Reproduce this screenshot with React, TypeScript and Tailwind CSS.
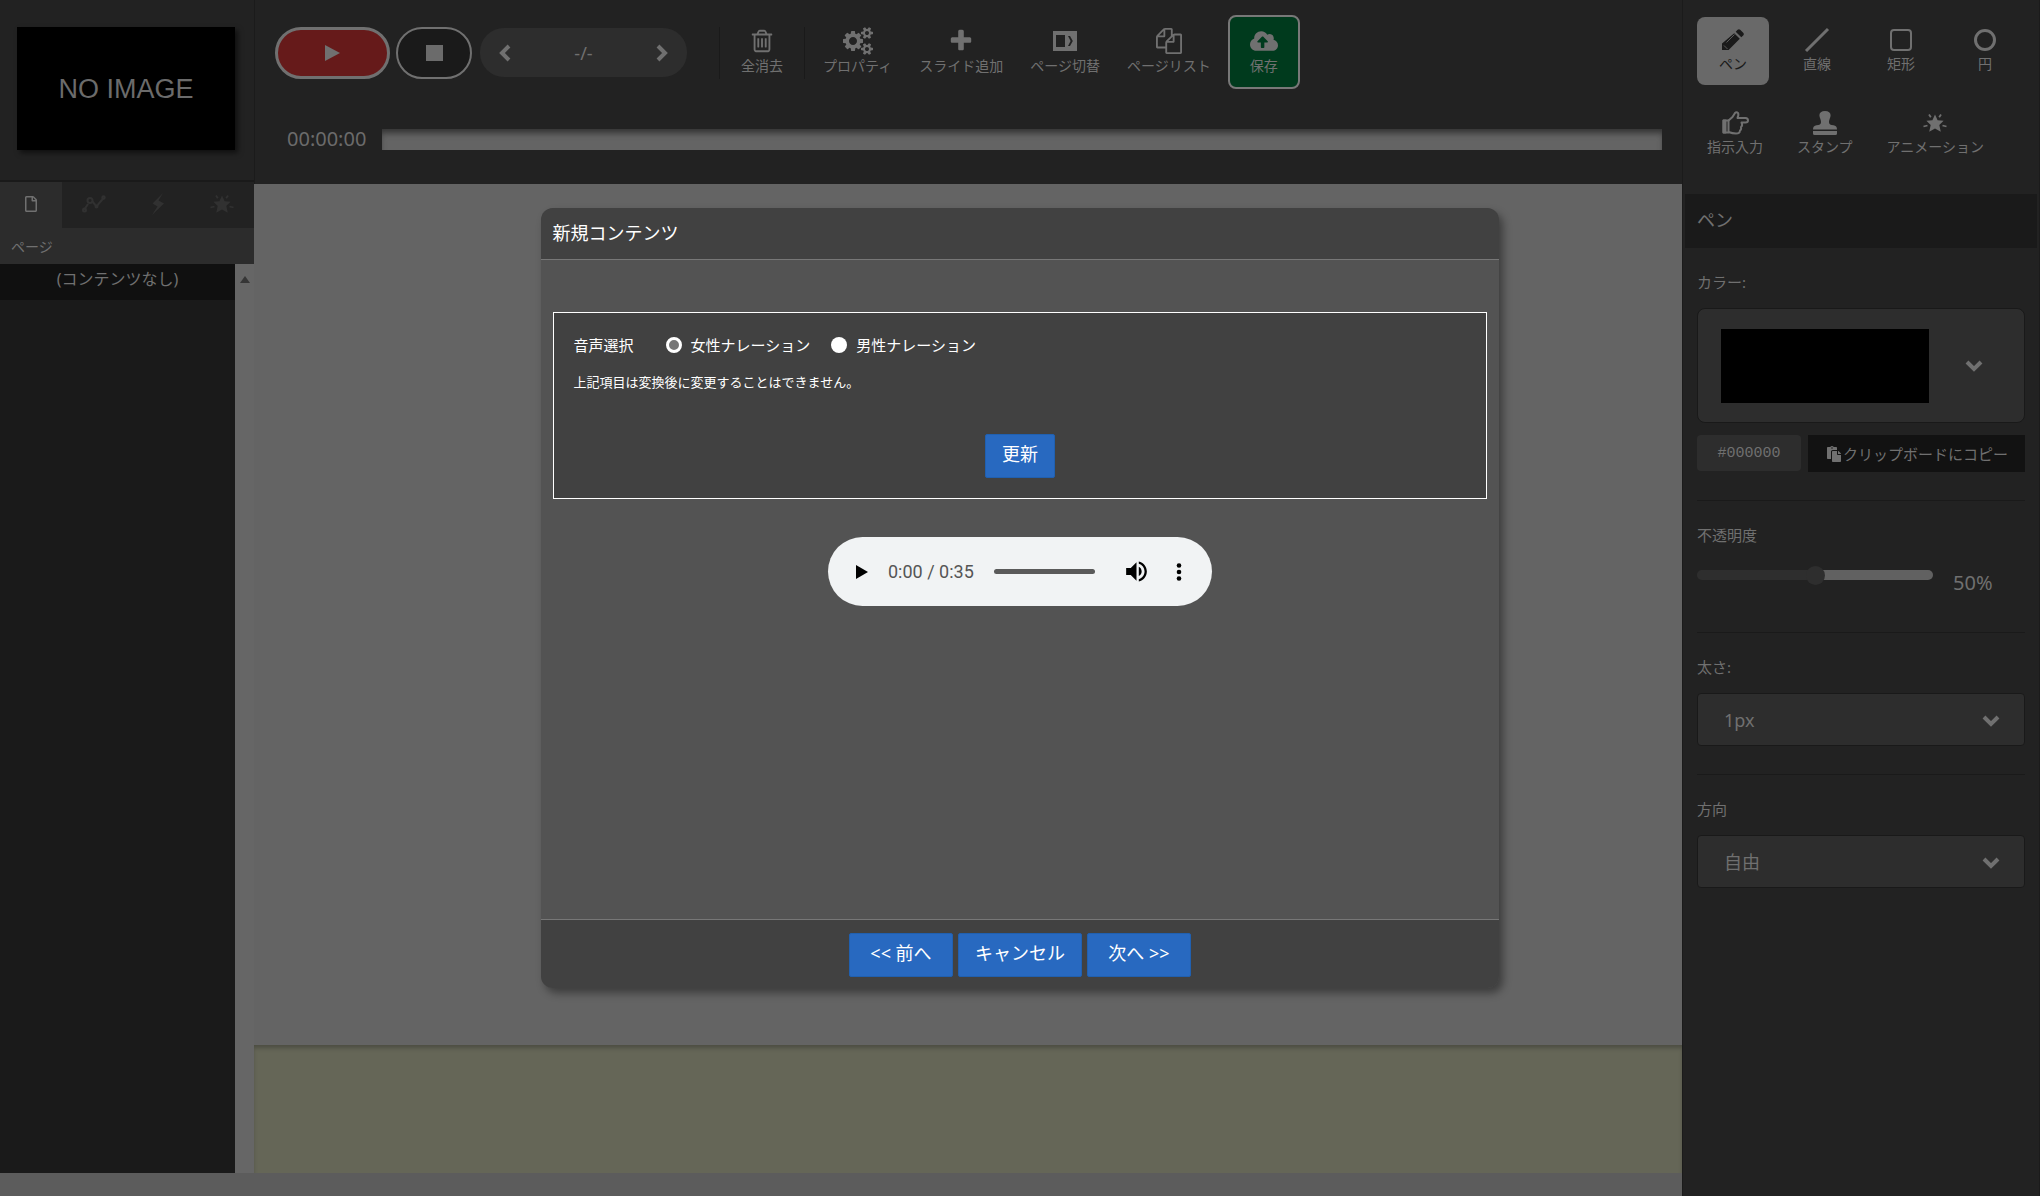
import { useState, type ReactNode } from "react";
import { FaCloudUploadAlt, FaPaste, FaRegFile } from "react-icons/fa";

const TrashIcon = () => (
  <svg viewBox="0 0 1792 1792" className="h-[26px] w-[26px] fill-current">
    <path d="M704 736v576q0 14-9 23t-23 9h-64q-14 0-23-9t-9-23v-576q0-14 9-23t23-9h64q14 0 23 9t9 23zm256 0v576q0 14-9 23t-23 9h-64q-14 0-23-9t-9-23v-576q0-14 9-23t23-9h64q14 0 23 9t9 23zm256 0v576q0 14-9 23t-23 9h-64q-14 0-23-9t-9-23v-576q0-14 9-23t23-9h64q14 0 23 9t9 23zm128 724v-948h-896v948q0 22 7 40.5t14.5 27 10.5 8.5h832q3 0 10.5-8.5t14.5-27 7-40.5zm-672-1076h448l-48-117q-7-9-17-11h-317q-10 2-17 11zm928 32v64q0 14-9 23t-23 9h-96v948q0 83-47 143.5t-113 60.5h-832q-66 0-113-58.5t-47-141.5v-952h-96q-14 0-23-9t-9-23v-64q0-14 9-23t23-9h309l70-167q15-37 54-63t79-26h320q40 0 79 26t54 63l70 167h309q14 0 23 9t9 23z" />
  </svg>
);

const CogsIcon = () => (
  <svg viewBox="0 0 1920 1792" className="h-[28px] w-[30px] fill-current">
    <path d="M896 896q0-106-75-181t-181-75-181 75-75 181 75 181 181 75 181-75 75-181zm768 512q0-52-38-90t-90-38-90 38-38 90q0 53 37.5 90.5t90.5 37.5 90.5-37.5 37.5-90.5zm0-1024q0-52-38-90t-90-38-90 38-38 90q0 53 37.5 90.5t90.5 37.5 90.5-37.5 37.5-90.5zm-384 421v185q0 10-7 19.5t-16 10.5l-155 24q-11 35-32 76 34 48 90 115 7 11 7 20 0 12-7 19-23 30-82.5 89.5t-78.5 59.5q-11 0-21-7l-115-90q-37 19-77 31-11 108-23 155-7 24-30 24h-186q-11 0-20-7.5t-10-17.5l-23-153q-34-10-75-31l-118 89q-7 7-20 7-11 0-21-8-144-133-144-160 0-9 7-19 10-14 41-53t47-61q-23-44-35-82l-152-24q-10-1-17-9.5t-7-19.5v-185q0-10 7-19.5t16-10.5l155-24q11-35 32-76-34-48-90-115-7-11-7-20 0-12 7-20 22-30 82-89t79-59q11 0 21 7l115 90q34-18 77-32 11-108 23-154 7-24 30-24h186q11 0 20 7.5t10 17.5l23 153q34 10 75 31l118-89q8-7 20-7 11 0 21 8 144 133 144 160 0 8-7 19-12 16-42 54t-45 60q23 48 34 82l152 23q10 2 17 10.5t7 19.5zm640 533v140q0 16-149 31-12 27-30 52 51 113 51 138 0 4-4 7-122 71-124 71-8 0-46-47t-52-68q-20 2-30 2t-30-2q-14 21-52 68t-46 47q-2 0-124-71-4-3-4-7 0-25 51-138-18-25-30-52-149-15-149-31v-140q0-16 149-31 13-29 30-52-51-113-51-138 0-4 4-7 4-2 35-20t59-34 30-16q8 0 46 46.5t52 67.5q20-2 30-2t30 2q51-71 92-112l6-2q4 0 124 70 4 3 4 7 0 25-51 138 17 23 30 52 149 15 149 31zm0-1024v140q0 16-149 31-12 27-30 52 51 113 51 138 0 4-4 7-122 71-124 71-8 0-46-47t-52-68q-20 2-30 2t-30-2q-14 21-52 68t-46 47q-2 0-124-71-4-3-4-7 0-25 51-138-18-25-30-52-149-15-149-31v-140q0-16 149-31 13-29 30-52-51-113-51-138 0-4 4-7 4-2 35-20t59-34 30-16q8 0 46 46.5t52 67.5q20-2 30-2t30 2q51-71 92-112l6-2q4 0 124 70 4 3 4 7 0 25-51 138 17 23 30 52 149 15 149 31z" />
  </svg>
);

const PlusIcon = () => (
  <svg viewBox="0 0 1792 1792" className="h-[26px] w-[26px] fill-current">
    <path d="M1600 736v192q0 40-28 68t-68 28h-416v416q0 40-28 68t-68 28h-192q-40 0-68-28t-28-68v-416h-416q-40 0-68-28t-28-68v-192q0-40 28-68t68-28h416v-416q0-40 28-68t68-28h192q40 0 68 28t28 68v416h416q40 0 68 28t28 68z" />
  </svg>
);

const FilesIcon = () => (
  <svg viewBox="0 0 1792 1792" className="h-[26px] w-[26px] fill-current">
    <path d="M1696 384q40 0 68 28t28 68v1216q0 40-28 68t-68 28h-960q-40 0-68-28t-28-68v-288h-544q-40 0-68-28t-28-68v-672q0-40 20-88t48-76l408-408q28-28 76-48t88-20h416q40 0 68 28t28 68v328q68-40 128-40h416zm-544 213l-299 299h299v-299zm-640-384l-299 299h299v-299zm196 647l316-316v-416h-384v416q0 40-28 68t-68 28h-416v640h512v-256q0-40 20-88t48-76zm956 804v-1152h-384v416q0 40-28 68t-68 28h-416v640h896z" />
  </svg>
);

const SwitchPageIcon = () => (
  <svg viewBox="0 0 24 20" className="h-5 w-6 fill-current">
    <path fillRule="evenodd" d="M0 0h24v20H0zM3 4v12h9V4zM15 5l2.600 5L15 15h2l2.800-5L17 5z" />
  </svg>
);

const BurstIcon = () => (
  <svg viewBox="0 0 24 24" className="h-6 w-6 fill-current stroke-current">
    <path strokeWidth="0" d="M12 3.500l2.600 5.700 6 .6-4.300 4.300 1.500 6.700L12 17.500l-5.800 3.300 1.500-6.700-4.300-4.300 6-.6z" />
    <path strokeWidth="1.800" d="M6 3.500l1.800 2.700M18 3.500l-1.800 2.700M.5 15.500l4-1M23.500 15.500l-4-1" />
  </svg>
);

const GraphIcon = () => (
  <svg viewBox="0 0 24 18" className="h-[18px] w-6 fill-none stroke-current" strokeWidth="2">
    <path d="M2 15l4-6M10 6l4.500 5.500L21.500 3" />
    <circle cx="2.500" cy="15" r="1.500" />
    <circle cx="8" cy="5.500" r="2.500" />
    <circle cx="14.500" cy="11.500" r="1" />
    <circle cx="21.500" cy="2.500" r="1.200" />
  </svg>
);

const FlashIcon = () => (
  <svg viewBox="0 0 14 22" className="h-[22px] w-3.5 fill-current">
    <path d="M12 0L1.500 10.500l5 3L1 22 13 10.500l-5.500-3z" />
  </svg>
);

const PencilIcon = () => (
  <svg viewBox="0 0 22 22" className="h-[22px] w-[22px]">
    <path className="fill-current" d="M12.200 4.200l5.600 5.600L6.600 21H0v-6.600zM13.700 2.700l1.900-1.900q1.300-1.300 2.600 0l3 3q1.300 1.300 0 2.600l-1.900 1.900z" />
    <path className="fill-none stroke-[#696969]" strokeWidth="0.800" d="M4.500 13.500l8-8M2 16.500l3.500 3.500" />
  </svg>
);

const LineIcon = () => (
  <svg viewBox="0 0 26 26" className="h-[26px] w-[26px] fill-none stroke-current" strokeWidth="3">
    <path d="M2 24L24 2" />
  </svg>
);

const RectIcon = () => (
  <svg viewBox="0 0 22 22" className="h-[22px] w-[22px] fill-none stroke-current" strokeWidth="2">
    <rect x="1" y="1" width="20" height="20" rx="3" />
  </svg>
);

const CircleIcon = () => (
  <svg viewBox="0 0 22 22" className="h-[22px] w-[22px] fill-none stroke-current" strokeWidth="3">
    <circle cx="11" cy="11" r="9.500" />
  </svg>
);

const HandIcon = () => (
  <svg viewBox="0 0 27 24" className="h-6 w-[27px] fill-none stroke-current" strokeWidth="2" strokeLinejoin="round">
    <path d="M1.500 9.500h5v12h-5z" />
    <path className="fill-current" d="M1.500 9.500h2v12h-2z" />
    <path d="M6.500 9.500l4-3.500 2.500-4q1.500-1.500 3 0 1 1.500-.5 5h8q2.500.2 2.500 2.300 0 2.200-2.500 2.200h-4q1.500 3-.5 4.500.5 3-1 3.500 0 3-4 3-3.500 0-7.500-1.500" />
  </svg>
);

const StampIcon = () => (
  <svg viewBox="0 0 24 24" className="h-6 w-6 fill-current">
    <path d="M12 0c3.600 0 5.600 1.600 5.600 4.300 0 2.200-1.600 4.200-1.600 6.700 0 2.300 1.500 3 4.500 3.300 2.300.3 3.500 1.700 3.500 4.200H0c0-2.500 1.200-3.900 3.500-4.200 3-.3 4.500-1 4.500-3.300 0-2.500-1.600-4.500-1.600-6.700C6.400 1.600 8.400 0 12 0zM0 20h24v2.500q0 1.500-1.500 1.500h-21Q0 24 0 22.500z" />
  </svg>
);

const ChevronDown = ({ className }: { className?: string }) => (
  <svg viewBox="0 0 18 12" className={`h-3 w-[18px] fill-none stroke-current ${className}`} strokeWidth="4">
    <path d="M2 2l7 7 7-7" />
  </svg>
);

const ChevronSide = ({ d }: { d: string }) => (
  <svg viewBox="0 0 12 18" className="h-[18px] w-3 fill-none stroke-current" strokeWidth="4">
    <path d={d} />
  </svg>
);

type ToolProps = { icon: ReactNode; label: string };

const ToolbarButton = ({ icon, label }: ToolProps) => (
  <button className="flex flex-col items-center pt-3">
    <span className="flex h-7 items-center">{icon}</span>
    <span className="pt-px text-sm leading-5">{label}</span>
  </button>
);

const PanelTool = ({ icon, label, active }: ToolProps & { active?: boolean }) => (
  <button
    className={`flex h-[68px] min-w-[72px] flex-col items-center rounded-lg px-2 pt-[9px] ${
      active ? "bg-[#696969] text-[#1a1a1a]" : ""
    }`}
  >
    <span className="flex h-7 items-center">{icon}</span>
    <span className="px-0.5 text-sm leading-5">{label}</span>
  </button>
);

const PanelSelect = ({ id, label, value }: { id: string; label: string; value: string }) => (
  <div className="mx-[14px] border-t border-[#1a1a1a] pt-[22px] pb-7">
    <label htmlFor={id} className="block text-[15px] leading-6">
      {label}
    </label>
    <div className="relative mt-[14px]">
      <select
        id={id}
        className="h-[53px] w-full appearance-none rounded border border-[#191919] bg-[#2d2d2d] px-[26px] text-lg"
      >
        <option>{value}</option>
      </select>
      <ChevronDown className="pointer-events-none absolute top-[22px] right-[25px]" />
    </div>
  </div>
);

const TABS = [
  { name: "図形", icon: <GraphIcon /> },
  { name: "効果", icon: <FlashIcon /> },
  { name: "アニメーション", icon: <BurstIcon /> },
];

const Sidebar = () => (
  <aside className="flex w-[254px] shrink-0 flex-col">
    <div className="h-[182px] border-b-2 border-[#1a1a1a] pt-[27px] pl-[17px]">
      <div className="flex h-[123px] w-[218px] items-center justify-center bg-black pt-0.5 font-['Liberation_Sans',sans-serif] text-[27px] text-[#6b6b6b] shadow-[3px_3px_5px_#0008]">
        NO IMAGE
      </div>
    </div>
    <div className="flex h-[46px] text-[#313131]">
      <button aria-label="ページ" className="flex w-[62px] items-center justify-center bg-[#2c2c2c] pb-0.5 text-[#707070]">
        <FaRegFile className="h-4 w-4" />
      </button>
      {TABS.map((tab) => (
        <button key={tab.name} aria-label={tab.name} className="flex flex-1 items-center justify-center pb-0.5">
          {tab.icon}
        </button>
      ))}
    </div>
    <div className="h-9 bg-[#2c2c2c] px-[11px] py-[7px] text-sm leading-6">ページ</div>
    <div className="flex flex-1 bg-[#1a1a1a]">
      <div className="flex-1">
        <div className="h-9 bg-[#101010] pt-[3px] text-center text-base leading-6">(コンテンツなし)</div>
      </div>
      <div className="flex w-[19px] justify-center bg-[#666] pt-3">
        <svg viewBox="0 0 10 7" className="h-[7px] w-[10px] fill-[#363636]">
          <path d="M0 7l5-7 5 7z" />
        </svg>
      </div>
    </div>
  </aside>
);

const Toolbar = () => (
  <header className="h-[184px] border-l border-[#1b1b1b] bg-[#222]">
    <div className="flex h-[104px] items-start pt-[15px] pl-5">
      <div className="mt-3 flex">
        <button
          aria-label="再生"
          className="flex h-[52px] w-[115px] items-center justify-center rounded-[26px] border-3 border-[#707070] bg-[#661a1a]"
        >
          <svg viewBox="0 0 15 16" className="h-4 w-[15px] fill-current">
            <path d="M0 0l15 8-15 8z" />
          </svg>
        </button>
        <button
          aria-label="停止"
          className="ml-1.5 flex h-[52px] w-[76px] items-center justify-center rounded-[26px] border-2 border-[#707070] bg-[#1a1a1a]"
        >
          <span className="h-4 w-[17px] bg-[#6b6b6b]" />
        </button>
        <div className="mt-px ml-2 flex h-[49px] w-[207px] items-center justify-between rounded-3xl bg-[#2d2d2d] px-[19px]">
          <button aria-label="前のページ">
            <ChevronSide d="M10 2L3 9l7 7" />
          </button>
          <span className="text-lg leading-6">-/-</span>
          <button aria-label="次のページ">
            <ChevronSide d="M2 2l7 7-7 7" />
          </button>
        </div>
      </div>
      <div className="mt-3 ml-8 h-[52px] w-px bg-[#1a1a1a]" />
      <div className="flex px-[21px]">
        <ToolbarButton icon={<TrashIcon />} label="全消去" />
      </div>
      <div className="mt-3 mr-[18px] h-[52px] w-px bg-[#1a1a1a]" />
      <div className="flex gap-[27px]">
        <ToolbarButton icon={<CogsIcon />} label="プロパティ" />
        <ToolbarButton icon={<PlusIcon />} label="スライド追加" />
        <ToolbarButton icon={<SwitchPageIcon />} label="ページ切替" />
        <ToolbarButton icon={<FilesIcon />} label="ページリスト" />
      </div>
      <button className="ml-[17px] flex h-[74px] w-[72px] flex-col items-center rounded-lg border-2 border-[#787878] bg-[#003a1d] pt-[10px]">
        <span className="flex h-7 items-center">
          <FaCloudUploadAlt className="h-7 w-7" />
        </span>
        <span className="pt-px text-sm leading-5">保存</span>
      </button>
    </div>
    <div className="flex items-center pt-[21px] pr-5 pl-8">
      <span className="w-[95px] text-xl leading-7 text-[#6b6b6b]">00:00:00</span>
      <div className="h-[21px] flex-1 bg-[#646464] shadow-[inset_0_6px_6px_-2px_#333]" />
    </div>
  </header>
);

const ToolPanel = () => {
  const [opacity, setOpacity] = useState(50);

  return (
    <aside className="w-[358px] shrink-0 border-x border-[#1b1b1b] bg-[#222]">
      <div className="h-[194px] px-[14px] pt-[17px]">
        <div className="flex gap-3">
          <PanelTool active icon={<PencilIcon />} label="ペン" />
          <PanelTool icon={<LineIcon />} label="直線" />
          <PanelTool icon={<RectIcon />} label="矩形" />
          <PanelTool icon={<CircleIcon />} label="円" />
        </div>
        <div className="mt-[15px] flex gap-[14px]">
          <PanelTool icon={<HandIcon />} label="指示入力" />
          <PanelTool icon={<StampIcon />} label="スタンプ" />
          <PanelTool icon={<BurstIcon />} label="アニメーション" />
        </div>
      </div>
      <h2 className="mx-0.5 h-[54px] bg-[#1a1a1a] px-3 pt-3 text-lg leading-7">ペン</h2>

      <div className="px-[14px] pt-[22px] pb-7">
        <p className="text-[15px] leading-6">カラー:</p>
        <button
          aria-label="カラー"
          className="mt-[14px] flex h-[115px] w-full items-center rounded-lg border border-[#191919] bg-[#2d2d2d] pl-[23px]"
        >
          <span className="h-[74px] w-[208px] bg-black" />
          <ChevronDown className="ml-9" />
        </button>
        <div className="mt-3 flex gap-[7px]">
          <input
            aria-label="カラーコード"
            readOnly
            value="#000000"
            className="h-9 w-[104px] rounded-sm bg-[#2d2d2d] text-center font-['Liberation_Mono',monospace] text-[15px]"
          />
          <button className="flex h-[37px] flex-1 items-center justify-center bg-[#121212] text-[15px] leading-6">
            <FaPaste className="h-4 w-[18px]" />
            クリップボードにコピー
          </button>
        </div>
      </div>

      <div className="mx-[14px] border-t border-[#1a1a1a] pt-[22px] pb-[29px]">
        <label htmlFor="opacity" className="block text-[15px] leading-6">
          不透明度
        </label>
        <div className="mt-4 flex h-10 items-start">
          <input
            id="opacity"
            type="range"
            min={0}
            max={100}
            value={opacity}
            onChange={(e) => setOpacity(Number(e.target.value))}
            className="mt-[7px] h-[10px] w-[236px] appearance-none rounded-full bg-linear-to-r from-[#2e2e2e] from-50% to-[#616161] to-50% [&::-webkit-slider-thumb]:h-[19px] [&::-webkit-slider-thumb]:w-[19px] [&::-webkit-slider-thumb]:appearance-none [&::-webkit-slider-thumb]:rounded-full [&::-webkit-slider-thumb]:bg-[#2e2e2e]"
          />
          <span className="ml-5 pt-1.5 text-xl leading-7">{opacity}%</span>
        </div>
      </div>

      <PanelSelect id="thickness" label="太さ:" value="1px" />
      <PanelSelect id="direction" label="方向" value="自由" />
    </aside>
  );
};

const AudioPlayer = () => (
  <div className="flex h-[69px] w-[384px] items-center rounded-full bg-[#f1f3f4] pl-7 font-[Roboto,sans-serif] text-black">
    <button aria-label="再生">
      <svg viewBox="0 0 12 14" className="h-[14px] w-3 fill-current">
        <path d="M0 0l12 7-12 7z" />
      </svg>
    </button>
    <span className="ml-5 w-[106px] text-lg leading-6 text-[#555]">0:00 / 0:35</span>
    <input
      type="range"
      aria-label="再生位置"
      defaultValue={0}
      className="h-[5px] w-[101px] appearance-none rounded-full bg-[#5a5a5a] [&::-webkit-slider-thumb]:w-0 [&::-webkit-slider-thumb]:appearance-none"
    />
    <button aria-label="音量" className="ml-[30px]">
      <svg viewBox="2 2 20 20" className="h-[23px] w-[23px] fill-current">
        <path d="M3 9v6h4l5 5V4L7 9H3zm13.500 3c0-1.770-1.020-3.290-2.500-4.030v8.050c1.480-.73 2.500-2.250 2.500-4.020zM14 3.230v2.060c2.890.86 5 3.540 5 6.710s-2.110 5.850-5 6.710v2.060c4.010-.91 7-4.490 7-8.770s-2.990-7.860-7-8.770z" />
      </svg>
    </button>
    <button aria-label="その他" className="ml-7">
      <svg viewBox="0 0 6 18" className="h-[18px] w-1.5 fill-current">
        <circle cx="3" cy="2.500" r="2.300" />
        <circle cx="3" cy="9" r="2.300" />
        <circle cx="3" cy="15.500" r="2.300" />
      </svg>
    </button>
  </div>
);

const VOICES = [
  { value: "female", label: "女性ナレーション" },
  { value: "male", label: "男性ナレーション" },
];

const NewContentDialog = () => {
  const [voice, setVoice] = useState("female");
  const buttonClass =
    "h-11 rounded-xs border border-[#2060b0] bg-[#2869c0] px-4 pb-1 text-lg leading-6 text-white";

  return (
    <section
      role="dialog"
      aria-labelledby="dialog-title"
      className="flex w-[47%] flex-col overflow-hidden rounded-xl bg-[#535353] text-white shadow-[4px_5px_8px_#0006]"
    >
      <h1 id="dialog-title" className="h-[52px] border-b border-[#777] bg-[#414141] px-3 pt-[11px] text-lg leading-7">
        新規コンテンツ
      </h1>
      <div className="flex min-h-[659px] flex-col items-center px-3 pt-[52px]">
        <div className="flex w-full flex-col border border-white bg-[#414141] p-5">
          <div className="flex items-center text-[15px] leading-6">
            <span className="mr-8">音声選択</span>
            {VOICES.map((item) => (
              <label key={item.value} className="mr-[21px] flex items-center gap-[9px]">
                <input
                  type="radio"
                  name="voice"
                  value={item.value}
                  checked={voice === item.value}
                  onChange={() => setVoice(item.value)}
                  className="h-4 w-4 appearance-none rounded-full bg-white checked:border-3 checked:border-white checked:bg-[#757575]"
                />
                {item.label}
              </label>
            ))}
          </div>
          <p className="mt-[15px] text-[13px] leading-5">上記項目は変換後に変更することはできません。</p>
          <button className={`${buttonClass} mt-[42px] self-center`}>更新</button>
        </div>
        <div className="mt-[38px]">
          <AudioPlayer />
        </div>
      </div>
      <div className="flex h-[69px] items-start justify-center gap-[5px] border-t border-[#777] bg-[#414141] pt-[13px]">
        <button className={`${buttonClass} min-w-[104px]`}>&lt;&lt; 前へ</button>
        <button className={buttonClass}>キャンセル</button>
        <button className={`${buttonClass} min-w-[104px]`}>次へ &gt;&gt;</button>
      </div>
    </section>
  );
};

export default function App() {
  return (
    <div className="relative flex min-h-screen bg-[#222] font-['Noto_Sans','Noto_Sans_CJK_JP',sans-serif] text-[#707070]">
      <div className="flex flex-1 flex-col">
        <div className="flex flex-1">
          <Sidebar />
          <div className="flex flex-1 flex-col">
            <Toolbar />
            <main className="flex-1 bg-[#646464]" />
            <div className="h-32 bg-[#656657] shadow-[inset_0_4px_4px_-1px_#4c4d42]" />
          </div>
        </div>
        <footer className="h-[23px] bg-[#5c5c5c]" />
      </div>
      <ToolPanel />

      {/* Dialog over the editor */}
      <div className="absolute inset-0 flex items-center justify-center">
        <NewContentDialog />
      </div>
    </div>
  );
}
